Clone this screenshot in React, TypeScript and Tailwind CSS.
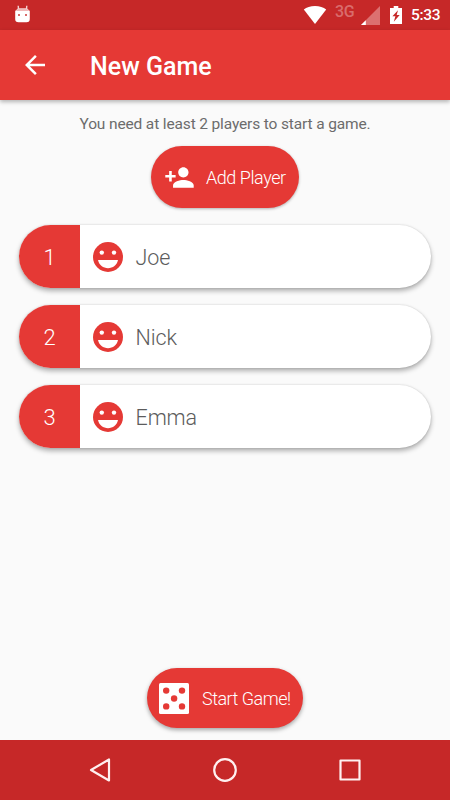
import React from "react";
import { MdArrowBack, MdPersonAdd } from "react-icons/md";

interface Player {
  id: number;
  name: string;
}

const players: Player[] = [
  { id: 1, name: "Joe" },
  { id: 2, name: "Nick" },
  { id: 3, name: "Emma" },
];

const StatusBar: React.FC = () => (
  <div className="flex h-[30px] shrink-0 items-center bg-[#c62828] pl-[15px] pr-[10px] text-white">
    <svg width="15" height="18" viewBox="0 0 15 18" className="-mt-[3px]">
      <path d="M3.6 5L3.2.8M11.4 5l.4-4.2" stroke="#f3cfcf" strokeWidth="1.4" />
      <path d="M3 3.4h9L14.8 6v8q0 3.3-3.3 3.3h-8Q.2 17.3.2 14V6z" fill="#fff" />
      <path d="M3 3.4h9L14.3 6H.7z" fill="#efb9b9" />
      <path d="M3 9h2v2H3zM10 9h2v2h-2z" fill="#d96a6a" />
    </svg>
    <svg width="24" height="20" viewBox="0 0 24 20" className="ml-auto">
      <path d="M0.8 4.5Q5 .9 12 .9t11.2 3.6L12 19z" fill="#fff" />
    </svg>
    <span className="-mt-[7px] ml-[8px] w-[22px] whitespace-nowrap text-[16px] font-medium leading-none tracking-[-0.3px] text-[#d96c6c]">
      3G
    </span>
    <svg width="19" height="19" viewBox="0 0 19 19" className="ml-[4px]">
      <path d="M19 0v19H0z" fill="#dc7070" />
      <path d="M4.8 14.2V19H0z" fill="#fff" />
    </svg>
    <svg width="12" height="18" viewBox="0 0 12 18" className="ml-[10px]">
      <path d="M3.7 0h4.6v2H12v16H0V2h3.7z" fill="#fff" />
      <path d="M8 4.2L2.4 10.3h3L3.8 15.8l5.9-6.7h-3z" fill="#c62828" />
    </svg>
    <span className="ml-[9px] mt-px w-[29px] whitespace-nowrap text-[15.5px] font-medium leading-none tracking-[-0.3px]">
      5:33
    </span>
  </div>
);

const SmileIcon: React.FC = () => (
  <svg width="30" height="30" viewBox="0 0 30 30">
    <circle cx="15" cy="15" r="15" fill="#e53935" />
    <circle cx="8.8" cy="10.6" r="2.2" fill="#fff" />
    <circle cx="21" cy="10.6" r="2.2" fill="#fff" />
    <path d="M5 18h20c-1 5-5.2 8.2-10 8.2S6 23 5 18z" fill="#fff" />
  </svg>
);

const DiceIcon: React.FC = () => (
  <svg width="30" height="31" viewBox="0 0 30 31" fill="#e53935">
    <rect width="30" height="31" rx="1.5" fill="#fff" />
    <circle cx="7.2" cy="7.6" r="3.2" />
    <circle cx="23" cy="7.6" r="3.2" />
    <circle cx="15.1" cy="15.5" r="3.2" />
    <circle cx="7.2" cy="23.4" r="3.2" />
    <circle cx="23" cy="23.4" r="3.2" />
  </svg>
);

const PlayerRow: React.FC<{ player: Player }> = ({ player }) => (
  <div className="flex h-[63px] items-center overflow-hidden rounded-full bg-white shadow-[0_3px_5px_rgba(0,0,0,0.3),0_0_2px_rgba(0,0,0,0.15)]">
    <div className="flex h-full w-[61px] items-center justify-center bg-[#e53935] text-[22px] font-light text-white">
      <span className="mt-[2px]">{player.id}</span>
    </div>
    <div className="ml-[13px]">
      <SmileIcon />
    </div>
    <span className="ml-[12.5px] mt-[3px] text-[21.5px] font-light tracking-[-0.1px] text-[#5c5c5c]">
      {player.name}
    </span>
  </div>
);

const NavBar: React.FC = () => (
  <div className="flex h-[60px] shrink-0 items-center justify-between bg-[#c62828] px-[88px]">
    <svg width="24" height="26" viewBox="0 0 24 26" fill="none" stroke="#fff0f0" strokeWidth="2.2" strokeLinejoin="round">
      <path d="M21 2.5v21L3 13z" />
    </svg>
    <svg width="26" height="26" viewBox="0 0 26 26" fill="none" stroke="#fff0f0" strokeWidth="2.2">
      <circle cx="13" cy="13" r="10.8" />
    </svg>
    <svg width="24" height="24" viewBox="0 0 24 24" fill="none" stroke="#fff0f0" strokeWidth="2.2" strokeLinejoin="round">
      <rect x="2.5" y="2.5" width="19" height="19" />
    </svg>
  </div>
);

const App: React.FC = () => {
  return (
    <div className="flex h-[800px] w-[450px] flex-col overflow-hidden bg-[#fafafa] font-['Roboto',sans-serif]">
      <StatusBar />
      <header className="flex h-[70px] shrink-0 items-center bg-[#e53935] pl-[20px] text-white shadow-[0_2px_4px_rgba(0,0,0,0.28)]">
        <MdArrowBack size={30} />
        <h1 className="ml-[40px] mt-[3px] text-[25px] font-medium leading-none">New Game</h1>
      </header>

      <main className="flex flex-1 flex-col items-center px-[19px] pb-[12px]">
        <p className="mt-[14px] text-[15.5px] leading-[20px] tracking-[-0.14px] text-[#6c6c6c]">
          You need at least 2 players to start a game.
        </p>
        <button className="mt-[12px] flex h-[62px] w-[148px] items-center rounded-full bg-[#e53935] pl-[13px] text-white shadow-[0_1px_3px_rgba(0,0,0,0.3)]">
          <MdPersonAdd size={31} />
          <span className="ml-[11px] mt-px whitespace-nowrap text-[18px] font-light tracking-[-0.45px]">Add Player</span>
        </button>

        <div className="mt-[17px] flex w-full flex-col gap-[17px]">
          {players.map((player) => (
            <PlayerRow key={player.id} player={player} />
          ))}
        </div>

        <button className="mt-auto flex h-[60px] w-[156px] items-center rounded-full bg-[#e53935] pl-[12px] text-white shadow-[0_2px_4px_rgba(0,0,0,0.35)]">
          <DiceIcon />
          <span className="ml-[13px] mt-px whitespace-nowrap text-[18px] font-light tracking-[-0.5px]">Start Game!</span>
        </button>
      </main>

      <NavBar />
    </div>
  );
};

export default App;
